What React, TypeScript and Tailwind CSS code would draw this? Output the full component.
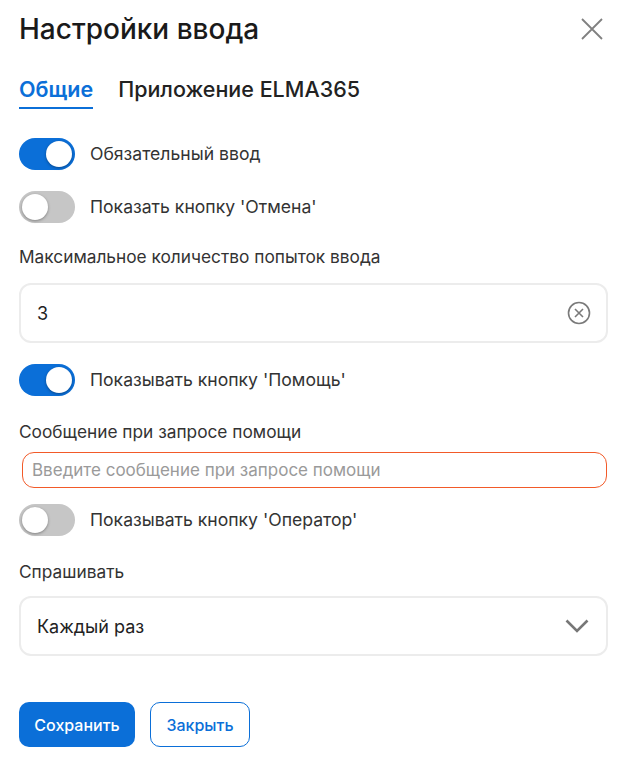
import { useState } from 'react';

export default function App() {
    const [required, setRequired] = useState(true);
    const [cancel, setCancel] = useState(false);
    const [help, setHelp] = useState(true);
    const [operator, setOperator] = useState(false);

    return (
        <div className="h-[766px] w-[622px] bg-white pl-[19px] pr-[14px] font-['Inter',sans-serif] text-[#333]">
            {/* HEADER */}
            <div className="flex h-[58px] items-center justify-between">
                <h2 className="text-[28px] font-medium leading-[32px] text-[#1a1a1a]">Настройки ввода</h2>
                <button className="mr-[5px] text-[#808080]">
                    <svg width="22" height="22" viewBox="0 0 22 22" fill="none" stroke="currentColor" strokeWidth="1.8">
                        <path d="M1 1L21 21M21 1L1 21" />
                    </svg>
                </button>
            </div>

            {/* TABS */}
            <div className="mt-[19px] flex gap-[25px]">
                <div className="border-b-2 border-[#0b6fd8] pb-[5px] text-[21.5px] font-semibold leading-[25px] text-[#0b6fd8]">
                    Общие
                </div>
                <div className="pb-[5px] text-[21.5px] font-medium leading-[25px] text-[#222]">Приложение ELMA365</div>
            </div>

            <div className="mt-[29px]">
                <ToggleRow on={required} toggle={() => setRequired(!required)}>
                    Обязательный ввод
                </ToggleRow>
            </div>
            <div className="mt-[21px]">
                <ToggleRow on={cancel} toggle={() => setCancel(!cancel)}>
                    Показать кнопку 'Отмена'
                </ToggleRow>
            </div>

            <Label className="mt-[22px]">Максимальное количество попыток ввода</Label>
            <div className="mt-[14px] flex h-[60px] items-center justify-between rounded-[12px] border-2 border-[#ececec] pl-[16px] pr-[15px]">
                <span className="text-[18px] text-[#222]">3</span>
                <svg width="24" height="24" viewBox="0 0 24 24" fill="none" stroke="#7a7a7a" strokeWidth="1.6">
                    <circle cx="12" cy="12" r="10.5" />
                    <path d="M8 8L16 16M16 8L8 16" />
                </svg>
            </div>

            <div className="mt-[21px]">
                <ToggleRow on={help} toggle={() => setHelp(!help)}>
                    Показывать кнопку 'Помощь'
                </ToggleRow>
            </div>

            <Label className="mt-[24px]">Сообщение при запросе помощи</Label>
            <input
                placeholder="Введите сообщение при запросе помощи"
                className="mt-[8px] ml-[3px] h-[36px] w-[585px] rounded-[12px] border border-[#f25a29] px-[9px] text-[17px] text-[#333] outline-none placeholder:text-[#9a9a9a]"
            />

            <div className="mt-[16px]">
                <ToggleRow on={operator} toggle={() => setOperator(!operator)}>
                    Показывать кнопку 'Оператор'
                </ToggleRow>
            </div>

            <Label className="mt-[24px]">Спрашивать</Label>
            <div className="mt-[12px] flex h-[60px] items-center justify-between rounded-[12px] border-2 border-[#ececec] pl-[16px] pr-[17px]">
                <span className="text-[18px] text-[#222]">Каждый раз</span>
                <svg width="24" height="14" viewBox="0 0 24 14" fill="none" stroke="#777" strokeWidth="2.6">
                    <path d="M1.5 1.5L12 12L22.5 1.5" />
                </svg>
            </div>

            {/* FOOTER */}
            <div className="mt-[46px] flex gap-[15px]">
                <button className="h-[45px] w-[116px] rounded-[10px] bg-[#0b6fd8] text-[16px] font-medium text-white">
                    Сохранить
                </button>
                <button className="h-[45px] w-[100px] rounded-[10px] border border-[#0b6fd8] text-[16px] font-medium text-[#0b6fd8]">
                    Закрыть
                </button>
            </div>
        </div>
    );
}

function Label({ className, children }: { className: string; children: React.ReactNode }) {
    return <div className={`text-[17.3px] leading-[24px] text-[#333] ${className}`}>{children}</div>;
}

function ToggleRow({ on, toggle, children }: { on: boolean; toggle: () => void; children: React.ReactNode }) {
    return (
        <label className="flex h-[32px] items-center gap-[15px]" onClick={toggle}>
            <span
                className={`flex h-[32px] w-[56px] items-center rounded-full px-[3px] ${on ? 'justify-end bg-[#0b6fd8]' : 'justify-start bg-[#c6c6c6]'}`}
            >
                <span className="h-[26px] w-[26px] rounded-full bg-white shadow-[0_1px_3px_rgba(0,0,0,0.35)]" />
            </span>
            <span className="text-[17.6px] text-[#333]">{children}</span>
        </label>
    );
}
